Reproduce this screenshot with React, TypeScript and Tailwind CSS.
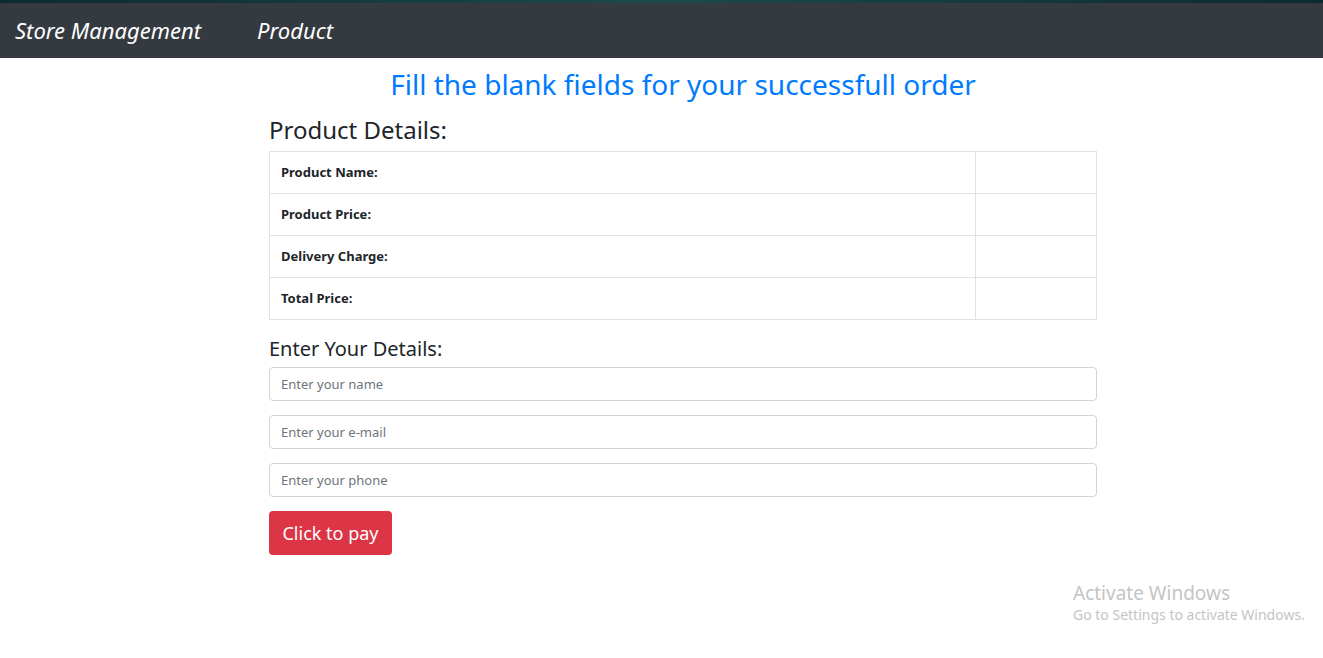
import React from "react";

const rows = ["Product Name:", "Product Price:", "Delivery Charge:", "Total Price:"];
const fields = ["Enter your name", "Enter your e-mail", "Enter your phone"];

export default function App() {
  return (
    <div className="relative min-h-[658px] bg-white font-['Noto_Sans',sans-serif] text-[#212529]">
      {/* Navbar */}
      <div className="h-[3px] bg-gradient-to-r from-[#0d2a2e] via-[#1c4a4e] to-[#0d2a2e]" />
      <nav className="flex h-[55px] items-center bg-[#343a40] px-[15px]">
        <span className="text-[22px] italic text-white">Store Management</span>
        <span className="ml-[56px] text-[22px] italic text-white">Product</span>
      </nav>

      <div className="ml-[269px] w-[828px]">
        <h1 className="mt-[6px] text-center text-[28px] leading-[40px] text-[#007bff]">
          Fill the blank fields for your successfull order
        </h1>

        <h2 className="mt-[11px] text-[24px] leading-[30px]">Product Details:</h2>
        <table className="mt-[6px] w-full border-collapse border border-[#dee2e6]">
          <tbody>
            {rows.map((r) => (
              <tr key={r} className="h-[42px]">
                <td className="w-[706px] border border-[#dee2e6] px-[11px] text-[13px] font-bold">{r}</td>
                <td className="border border-[#dee2e6]" />
              </tr>
            ))}
          </tbody>
        </table>

        <h3 className="mt-[15px] text-[20px] leading-[28px]">Enter Your Details:</h3>
        <div className="mt-[4px] flex flex-col gap-[14px]">
          {fields.map((f) => (
            <input
              key={f}
              placeholder={f}
              className="h-[34px] w-full rounded-[4px] border border-[#ced4da] px-[11px] text-[13px] placeholder:text-[#6c757d] outline-none"
            />
          ))}
        </div>

        <button className="mt-[14px] h-[44px] w-[123px] rounded-[4px] bg-[#dc3545] text-[18px] text-white">
          Click to pay
        </button>
      </div>

      {/* Windows activation watermark */}
      <div className="absolute left-[1073px] top-[581px] text-[#c4c4c4]">
        <div className="text-[19px] leading-[24px]">Activate Windows</div>
        <div className="text-[14px] leading-[20px]">Go to Settings to activate Windows.</div>
      </div>
    </div>
  );
}
